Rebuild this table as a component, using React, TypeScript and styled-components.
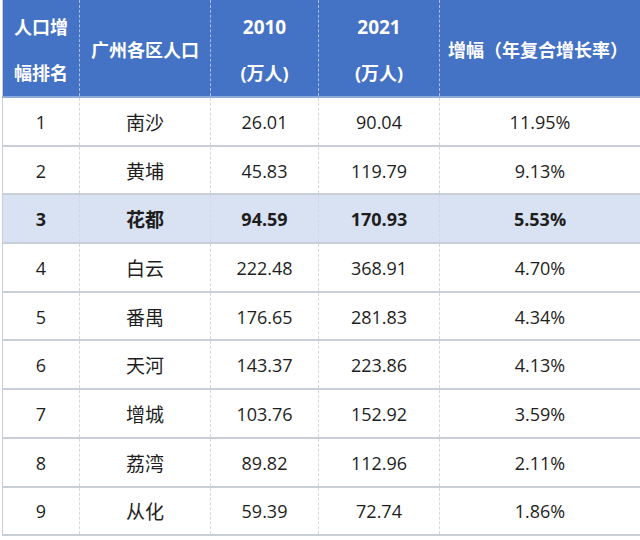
import React from 'react';
import styled, { createGlobalStyle } from 'styled-components';

const GlobalStyle = createGlobalStyle`
  html, body {
    margin: 0;
    padding: 0;
    background: #ffffff;
  }
  body {
    font-family: "Open Sans", "Noto Sans CJK SC", sans-serif;
  }
`;

const Table = styled.table`
  width: 638px;
  margin-left: 2px;
  border-collapse: collapse;
  table-layout: fixed;
  border-left: 1px solid #c9cfd9;
  border-bottom: 2px solid #c9cfd9;
`;

const HeadRow = styled.tr`
  height: 97px;
  background: #4472c4;
  border-bottom: 2px solid #8eaadb;
`;

const HeadCell = styled.th<{ $last?: boolean }>`
  color: #ffffff;
  font-family: "Open Sans", "Noto Sans CJK SC", sans-serif;
  font-weight: 700;
  font-size: 18px;
  line-height: 46px;
  text-align: ${(p) => (p.$last ? 'left' : 'center')};
  padding: ${(p) => (p.$last ? '4px 0 0 8px' : '4px 0 0')};
  border-right: 1px dashed rgba(255, 255, 255, 0.55);
  &:last-child {
    border-right: none;
  }
`;

const Year = styled.span`
  font-size: 19px;
`;

const Row = styled.tr<{ $hi?: boolean }>`
  height: 48.7px;
  background: ${(p) => (p.$hi ? '#d9e2f3' : '#ffffff')};
  border-bottom: 2px solid #c9cfd9;
`;

const Cell = styled.td<{ $hi?: boolean; $cjk?: boolean }>`
  text-align: center;
  color: #1e1e1e;
  font-family: "Open Sans", "Noto Sans CJK SC", sans-serif;
  font-size: ${(p) => (p.$cjk ? '19px' : '18px')};
  font-weight: ${(p) => (p.$hi ? 700 : 400)};
  padding: 1px 0 0;
  border-right: 1px dashed #d3d7de;
  &:last-child {
    border-right: none;
  }
`;

const rows = [
  ['1', '南沙', '26.01', '90.04', '11.95%'],
  ['2', '黄埔', '45.83', '119.79', '9.13%'],
  ['3', '花都', '94.59', '170.93', '5.53%'],
  ['4', '白云', '222.48', '368.91', '4.70%'],
  ['5', '番禺', '176.65', '281.83', '4.34%'],
  ['6', '天河', '143.37', '223.86', '4.13%'],
  ['7', '增城', '103.76', '152.92', '3.59%'],
  ['8', '荔湾', '89.82', '112.96', '2.11%'],
  ['9', '从化', '59.39', '72.74', '1.86%'],
];

export default function App() {
  return (
    <>
      <GlobalStyle />
      <Table>
        <colgroup>
          <col style={{ width: 77 }} />
          <col style={{ width: 131 }} />
          <col style={{ width: 108 }} />
          <col style={{ width: 121 }} />
          <col />
        </colgroup>
        <thead>
          <HeadRow>
            <HeadCell>
              人口增
              <br />
              幅排名
            </HeadCell>
            <HeadCell>广州各区人口</HeadCell>
            <HeadCell>
              <Year>2010</Year>
              <br />
              (万人)
            </HeadCell>
            <HeadCell>
              <Year>2021</Year>
              <br />
              (万人)
            </HeadCell>
            <HeadCell $last>增幅（年复合增长率）</HeadCell>
          </HeadRow>
        </thead>
        <tbody>
          {rows.map((r) => {
            const hi = r[0] === '3';
            return (
              <Row key={r[0]} $hi={hi}>
                {r.map((v, i) => (
                  <Cell key={i} $hi={hi} $cjk={i === 1}>
                    {v}
                  </Cell>
                ))}
              </Row>
            );
          })}
        </tbody>
      </Table>
    </>
  );
}
